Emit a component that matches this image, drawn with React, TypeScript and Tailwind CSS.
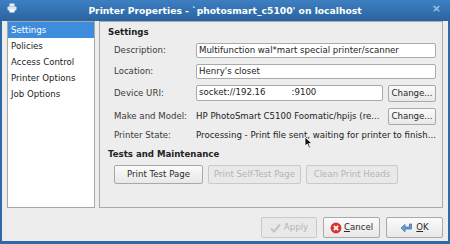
import React from "react";

const font = { fontFamily: '"DejaVu Sans", "Liberation Sans", sans-serif' };

function PrinterIcon() {
  return (
    <svg width="10" height="10" viewBox="0 0 10 10">
      <rect x="2.5" y="0.5" width="5" height="3" fill="#e8eef6" />
      <rect x="0.5" y="3.5" width="9" height="4" rx="1" fill="#dfe7f1" />
      <rect x="2.5" y="6.5" width="5" height="3" fill="#ffffff" />
    </svg>
  );
}

function Cursor() {
  return (
    <svg width="9" height="13" viewBox="0 0 9 13" className="absolute left-[304px] top-[136px]">
      <path d="M1 1 L1 10 L3.3 8 L5 12 L6.4 11.4 L4.8 7.6 L8 7.6 Z" fill="#111" stroke="#fff" strokeWidth="0.8" />
    </svg>
  );
}

function Btn({ children, disabled, className = "" }: { children: React.ReactNode; disabled?: boolean; className?: string }) {
  return (
    <div
      className={
        "flex items-center justify-center rounded-[2px] border " +
        (disabled
          ? "border-[#c9c9c9] bg-[#e9e9e9] text-[#b4b4b4] "
          : "border-[#a9a9a9] bg-gradient-to-b from-[#fbfbfb] to-[#e8e8e8] text-[#2a2a2a] ") +
        className
      }
    >
      {children}
    </div>
  );
}

function Field({ value, className = "" }: { value: React.ReactNode; className?: string }) {
  return (
    <div className={"flex h-[15px] items-center rounded-[2px] border border-[#aaaaaa] bg-white px-[2px] text-[#222] " + className}>
      {value}
    </div>
  );
}

export default function App() {
  const items = ["Settings", "Policies", "Access Control", "Printer Options", "Job Options"];
  return (
    <div className="relative flex h-[244px] w-[450px] flex-col bg-[#2d6aa6] text-[8.6px] leading-none" style={font}>
      {/* title bar */}
      <div className="relative flex h-[21px] items-center justify-center bg-gradient-to-b from-[#3d7fc1] to-[#2a64a0]">
        <div className="absolute left-[7px] top-[3px]">
          <PrinterIcon />
        </div>
        <span className="text-[9.2px] font-bold text-white">Printer Properties - `photosmart_c5100' on localhost</span>
        <span className="absolute right-[9px] top-[3px] text-[11px] font-bold text-[#9cc4ea]">×</span>
      </div>

      {/* window body */}
      <div className="mx-[2px] mb-[3px] flex flex-1 flex-col bg-[#ededed] px-[5px]">
        <div className="flex h-[187px] gap-[4px]">
          {/* side list */}
          <div className="w-[88px] border border-[#a6a6a6] bg-white">
            {items.map((it, i) => (
              <div
                key={it}
                className={
                  "flex h-[16px] items-center px-[3px] " +
                  (i === 0 ? "bg-[#3e8ddd] text-white" : "text-[#222]")
                }
              >
                {it}
              </div>
            ))}
          </div>

          {/* settings panel */}
          <div className="relative flex w-[344px] flex-col border border-[#aaaaaa] bg-[#ededed] pl-[8px] pt-[6px] text-[#3a3a3a]">
            <div className="font-bold text-[#222]">Settings</div>
            <div className="mt-[6px] grid grid-cols-[82px_1fr] items-center gap-y-[6px] pl-[6px] pr-[6px]">
              <span>Description:</span>
              <Field value="Multifunction wal*mart special printer/scanner" />
              <span>Location:</span>
              <Field value="Henry's closet" />
              <span>Device URI:</span>
              <div className="flex gap-[5px]">
                <Field value={<>socket://192.16<span className="inline-block w-[26px]" />:9100</>} className="h-[16px] flex-1" />
                <Btn className="h-[17px] w-[48px]">Change...</Btn>
              </div>
              <span>Make and Model:</span>
              <div className="flex items-center gap-[5px]">
                <span className="flex-1 text-[#222]">HP PhotoSmart C5100 Foomatic/hpijs (re...</span>
                <Btn className="h-[17px] w-[48px]">Change...</Btn>
              </div>
              <span>Printer State:</span>
              <span className="text-[#222]">Processing - Print file sent, waiting for printer to finish...</span>
            </div>
            <div className="mt-[11px] font-bold text-[#222]">Tests and Maintenance</div>
            <div className="mt-[6px] flex gap-[5px] pl-[6px]">
              <Btn className="h-[19px] w-[89px]">Print Test Page</Btn>
              <Btn disabled className="h-[19px] w-[93px]">Print Self-Test Page</Btn>
              <Btn disabled className="h-[19px] w-[92px]">Clean Print Heads</Btn>
            </div>
          </div>
        </div>

        {/* dialog buttons */}
        <div className="mt-[9px] flex justify-end gap-[6px]">
          <Btn disabled className="h-[21px] w-[56px] gap-[3px]">
            <svg width="11" height="10" viewBox="0 0 11 10">
              <path d="M1 5.5 L4 8.5 L10 1.5" fill="none" stroke="#c4c4c4" strokeWidth="2" />
            </svg>
            Apply
          </Btn>
          <Btn className="h-[21px] w-[57px] gap-[2px]">
            <svg width="12" height="12" viewBox="0 0 11 11">
              <circle cx="5.5" cy="5.5" r="5" fill="#d7342a" />
              <path d="M3.5 3.5 L7.5 7.5 M7.5 3.5 L3.5 7.5" stroke="#fff" strokeWidth="1.5" />
            </svg>
            <span>
              <span className="underline">C</span>ancel
            </span>
          </Btn>
          <Btn className="h-[21px] w-[57px] gap-[3px]">
            <svg width="13" height="10" viewBox="0 0 13 10">
              <path d="M11.5 1 L11.5 6 L5 6 L5 8.8 L1 5 L5 1.5 L5 4 L9.5 4 L9.5 1 Z" fill="#6f9fd6" stroke="#3c6ea8" strokeWidth="0.8" />
            </svg>
            <span>
              <span className="underline">O</span>K
            </span>
          </Btn>
        </div>
      </div>
      <Cursor />
    </div>
  );
}
